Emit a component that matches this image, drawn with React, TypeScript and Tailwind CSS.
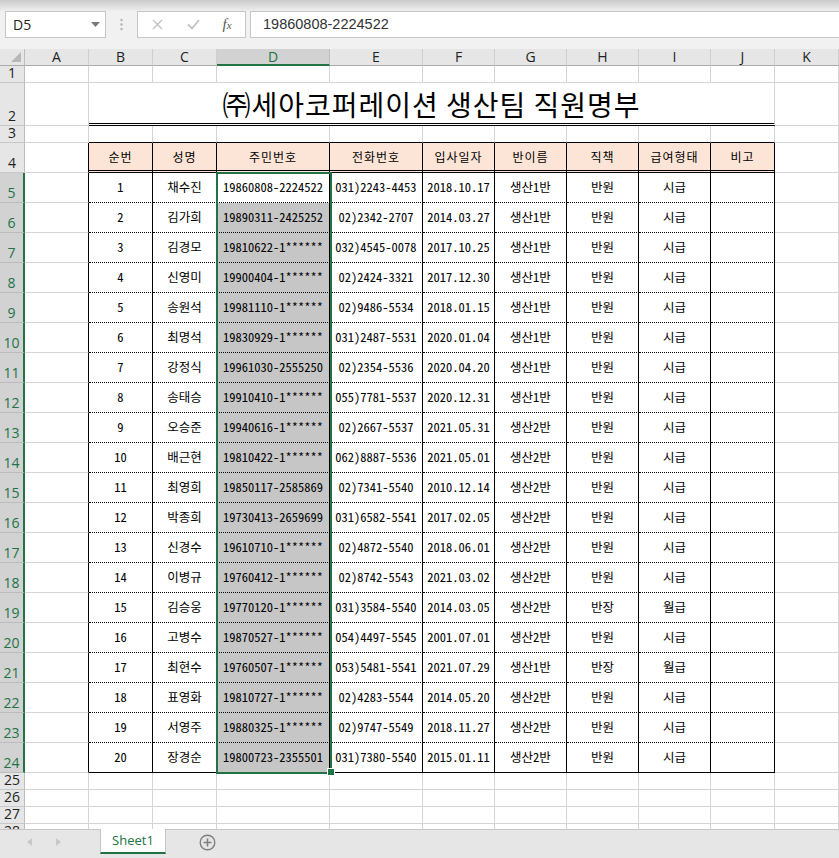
import React from "react";

const LETTERS = ["A", "B", "C", "D", "E", "F", "G", "H", "I", "J", "K"];
const WIDTHS = [
  "w-[64px]",
  "w-[64px]",
  "w-[64px]",
  "w-[113px]",
  "w-[93px]",
  "w-[72px]",
  "w-[72px]",
  "w-[72px]",
  "w-[72px]",
  "w-[64px]",
  "w-[64px]",
];

const HEADERS = ["순번", "성명", "주민번호", "전화번호", "입사일자", "반이름", "직책", "급여형태", "비고"];

type Person = [string, string, string, string, string, string, string];

const people: Person[] = [
  ["채수진", "19860808-2224522", "031)2243-4453", "2018.10.17", "생산1반", "반원", "시급"],
  ["김가희", "19890311-2425252", "02)2342-2707", "2014.03.27", "생산1반", "반원", "시급"],
  ["김경모", "19810622-1******", "032)4545-0078", "2017.10.25", "생산1반", "반원", "시급"],
  ["신영미", "19900404-1******", "02)2424-3321", "2017.12.30", "생산1반", "반원", "시급"],
  ["송원석", "19981110-1******", "02)9486-5534", "2018.01.15", "생산1반", "반원", "시급"],
  ["최명석", "19830929-1******", "031)2487-5531", "2020.01.04", "생산1반", "반원", "시급"],
  ["강정식", "19961030-2555250", "02)2354-5536", "2020.04.20", "생산1반", "반원", "시급"],
  ["송태승", "19910410-1******", "055)7781-5537", "2020.12.31", "생산1반", "반원", "시급"],
  ["오승준", "19940616-1******", "02)2667-5537", "2021.05.31", "생산2반", "반원", "시급"],
  ["배근현", "19810422-1******", "062)8887-5536", "2021.05.01", "생산2반", "반원", "시급"],
  ["최영희", "19850117-2585869", "02)7341-5540", "2010.12.14", "생산2반", "반원", "시급"],
  ["박종희", "19730413-2659699", "031)6582-5541", "2017.02.05", "생산2반", "반원", "시급"],
  ["신경수", "19610710-1******", "02)4872-5540", "2018.06.01", "생산2반", "반원", "시급"],
  ["이병규", "19760412-1******", "02)8742-5543", "2021.03.02", "생산2반", "반원", "시급"],
  ["김승웅", "19770120-1******", "031)3584-5540", "2014.03.05", "생산2반", "반장", "월급"],
  ["고병수", "19870527-1******", "054)4497-5545", "2001.07.01", "생산2반", "반원", "시급"],
  ["최현수", "19760507-1******", "053)5481-5541", "2021.07.29", "생산1반", "반장", "월급"],
  ["표영화", "19810727-1******", "02)4283-5544", "2014.05.20", "생산2반", "반원", "시급"],
  ["서영주", "19880325-1******", "02)9747-5549", "2018.11.27", "생산2반", "반원", "시급"],
  ["장경순", "19800723-2355501", "031)7380-5540", "2015.01.11", "생산2반", "반원", "시급"],
];

const GRID = "border-r border-b border-[#d4d4d4]";

function RowHead({ n, selected }: { n: number; selected?: boolean }) {
  return (
    <div
      className={`w-[25px] shrink-0 flex items-end justify-center pb-[2px] text-[14px] leading-[14px] overflow-hidden font-['Open_Sans',sans-serif] border-b ${
        selected
          ? "bg-[#d2d2d2] text-[#217346] border-r-2 border-r-[#217346] border-b-[#bcbcbc]"
          : "bg-[#e6e6e6] text-[#222] border-r border-r-[#bdbdbd] border-b-[#c8c8c8]"
      }`}
    >
      {n}
    </div>
  );
}

function EmptyRow({ n, h }: { n: number; h: string }) {
  return (
    <div className={`flex ${h}`}>
      <RowHead n={n} />
      {WIDTHS.map((w, i) => (
        <div key={i} className={`${w} shrink-0 ${GRID}`} />
      ))}
    </div>
  );
}

function FormulaBar() {
  return (
    <div className="h-[49px] shrink-0 bg-[#f1f1f1] flex flex-col">
      <div className="h-[11px] bg-linear-to-b from-[#cbcbcb] to-[#eeeeee]" />
      <div className="h-[27px] flex items-stretch font-['Open_Sans',sans-serif]">
        <div className="ml-[5px] w-[101px] bg-white border border-[#c6c6c6] flex items-center justify-between pl-[7px] pr-[5px]">
          <span className="text-[14px] text-[#222]">D5</span>
          <svg width="9" height="5" viewBox="0 0 9 5">
            <path d="M0 0h9L4.5 5z" fill="#7a7a7a" />
          </svg>
        </div>
        <div className="w-[31px] flex items-center justify-center">
          <svg width="3" height="13" viewBox="0 0 3 13">
            <circle cx="1.5" cy="2" r="1.2" fill="#b4b4b4" />
            <circle cx="1.5" cy="6.5" r="1.2" fill="#b4b4b4" />
            <circle cx="1.5" cy="11" r="1.2" fill="#b4b4b4" />
          </svg>
        </div>
        <div className="w-[109px] bg-white border border-[#c6c6c6] flex items-center">
          <div className="w-[38px] flex justify-center">
            <svg width="11" height="11" viewBox="0 0 11 11">
              <path d="M1 1l9 9M10 1l-9 9" stroke="#c2c2c2" strokeWidth="1.4" />
            </svg>
          </div>
          <div className="w-[34px] flex justify-center">
            <svg width="13" height="11" viewBox="0 0 13 11">
              <path d="M1 5.5l4 4L12 1" stroke="#c2c2c2" strokeWidth="1.8" fill="none" />
            </svg>
          </div>
          <div className="w-[34px] flex justify-center">
            <span className="font-['Liberation_Serif',serif] italic text-[15px] text-[#5a5a5a] leading-none">
              f<span className="text-[11px]">x</span>
            </span>
          </div>
        </div>
        <div className="ml-[4px] flex-1 bg-white border border-[#c6c6c6] border-r-0 flex items-center pl-[12px]">
          <span className="text-[14.5px] text-[#333] font-['Liberation_Sans',sans-serif]">19860808-2224522</span>
        </div>
      </div>
    </div>
  );
}

function ColumnHeader() {
  return (
    <div className="flex h-[17px] bg-[#e6e6e6] font-['Open_Sans',sans-serif] text-[14px] leading-[14px]">
      <div className="w-[25px] shrink-0 border-r border-b border-r-[#bdbdbd] border-b-[#ababab] flex items-end justify-end pr-[3px] pb-[3px]">
        <svg width="10" height="10" viewBox="0 0 10 10">
          <path d="M10 0v10H0z" fill="#b8b8b8" />
        </svg>
      </div>
      {LETTERS.map((l, i) =>
        l === "D" ? (
          <div
            key={l}
            className={`${WIDTHS[i]} shrink-0 bg-[#d2d2d2] text-[#217346] border-r border-r-[#bdbdbd] border-b-2 border-b-[#217346] flex items-center justify-center`}
          >
            {l}
          </div>
        ) : (
          <div
            key={l}
            className={`${WIDTHS[i]} shrink-0 text-[#222] border-r border-r-[#cfcfcf] border-b border-b-[#ababab] flex items-center justify-center`}
          >
            {l}
          </div>
        )
      )}
    </div>
  );
}

function Sheet() {
  const cellFont =
    "font-['Noto_Sans_CJK_KR',sans-serif] text-[12.5px] text-black [font-feature-settings:'hwid']";

  return (
    <div className="relative flex-1 overflow-hidden bg-white">
      <ColumnHeader />
      <EmptyRow n={1} h="h-[17px]" />

      {/* title row */}
      <div className="flex h-[43px]">
        <RowHead n={2} />
        <div className={`w-[64px] shrink-0 ${GRID}`} />
        <div className="w-[686px] shrink-0 border-r border-r-[#d4d4d4] border-b-[3px] border-double border-b-black flex items-end justify-center pb-[5px]">
          <span className="font-['Noto_Sans_CJK_KR',sans-serif] text-[28px] tracking-[1px] leading-none text-black">
            ㈜세아코퍼레이션 생산팀 직원명부
          </span>
        </div>
        <div className={`w-[64px] shrink-0 ${GRID}`} />
      </div>

      {/* spacer row above table */}
      <div className="flex h-[17px]">
        <RowHead n={3} />
        {WIDTHS.map((w, i) => (
          <div
            key={i}
            className={`${w} shrink-0 ${
              i >= 1 && i <= 9
                ? "border-r border-r-[#d4d4d4] border-b border-b-black"
                : GRID
            }`}
          />
        ))}
      </div>

      {/* header row */}
      <div className="flex h-[30px]">
        <RowHead n={4} />
        <div className="w-[64px] shrink-0 border-r border-r-black border-b border-b-[#d4d4d4]" />
        {HEADERS.map((t, i) => (
          <div
            key={t}
            className={`${WIDTHS[i + 1]} shrink-0 bg-[#fce4d6] border-r border-r-black border-b-[3px] border-double border-b-black flex items-center justify-center ${cellFont} text-[12px] tracking-[1px]`}
          >
            {t}
          </div>
        ))}
        <div className={`w-[64px] shrink-0 ${GRID}`} />
      </div>

      {/* data rows */}
      {people.map((p, r) => {
        const last = r === people.length - 1;
        const values = [String(r + 1), ...p, ""];
        return (
          <div key={r} className="flex h-[30px]">
            <RowHead n={r + 5} selected />
            <div className="w-[64px] shrink-0 border-r border-r-black border-b border-b-[#d4d4d4]" />
            {values.map((v, i) => (
              <div
                key={i}
                className={`${WIDTHS[i + 1]} shrink-0 border-r border-r-black border-b border-b-black ${
                  last ? "" : "[border-bottom-style:dotted]"
                } ${i === 2 && r > 0 ? "bg-[#c6c6c6]" : ""} flex items-center justify-center ${cellFont}`}
              >
                {v}
              </div>
            ))}
            <div className={`w-[64px] shrink-0 ${GRID}`} />
          </div>
        );
      })}

      <EmptyRow n={25} h="h-[17px]" />
      <EmptyRow n={26} h="h-[17px]" />
      <EmptyRow n={27} h="h-[17px]" />
      <EmptyRow n={28} h="h-[17px]" />

      {/* selection outline D5:D24 */}
      <div className="absolute left-[216px] top-[123px] w-[116px] h-[602px] border-2 border-[#217346] pointer-events-none" />
      <div className="absolute left-[327px] top-[719px] w-[8px] h-[8px] bg-[#217346] border border-white pointer-events-none" />
    </div>
  );
}

function TabBar() {
  return (
    <div className="h-[29px] shrink-0 bg-[#e6e6e6] border-t border-[#c6c6c6] flex items-start font-['Open_Sans',sans-serif]">
      <div className="w-[100px] h-[24px] flex items-center">
        <svg className="ml-[27px]" width="5" height="8" viewBox="0 0 5 8">
          <path d="M5 0v8L0 4z" fill="#c8c8c8" />
        </svg>
        <svg className="ml-[24px]" width="5" height="8" viewBox="0 0 5 8">
          <path d="M0 0v8l5-4z" fill="#c8c8c8" />
        </svg>
      </div>
      <div className="-mt-px w-[66px] h-[25px] bg-white border-x border-[#c6c6c6] border-b-2 border-b-[#217346] flex items-center justify-center">
        <span className="text-[13px] text-[#217346]">Sheet1</span>
      </div>
      <div className="ml-[33px] h-[24px] flex items-center">
        <svg width="17" height="17" viewBox="0 0 17 17">
          <circle cx="8.5" cy="8.5" r="7.3" stroke="#7f7f7f" strokeWidth="1.4" fill="none" />
          <path d="M8.5 4.5v8M4.5 8.5h8" stroke="#7f7f7f" strokeWidth="1.6" />
        </svg>
      </div>
    </div>
  );
}

export default function App() {
  return (
    <div className="w-[839px] h-[858px] overflow-hidden flex flex-col bg-white">
      <FormulaBar />
      <Sheet />
      <TabBar />
    </div>
  );
}
